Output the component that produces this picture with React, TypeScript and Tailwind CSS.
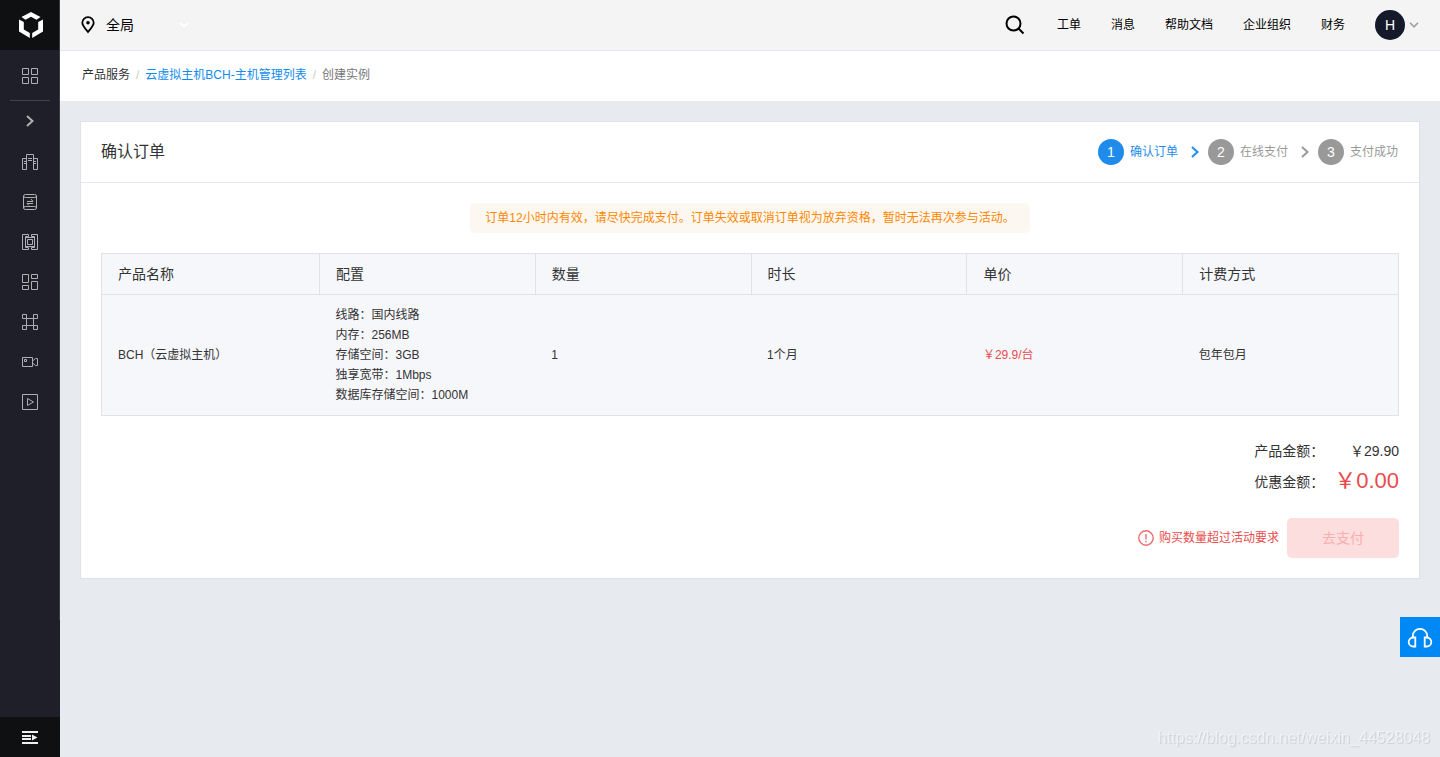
import type { ReactNode } from "react";

type Step = { n: number; label: string };

const NAV = ["工单", "消息", "帮助文档", "企业组织", "财务"];

const STEPS: Step[] = [
  { n: 1, label: "确认订单" },
  { n: 2, label: "在线支付" },
  { n: 3, label: "支付成功" },
];

const COLUMNS = ["产品名称", "配置", "数量", "时长", "单价", "计费方式"];

const SPECS = ["线路：国内线路", "内存：256MB", "存储空间：3GB", "独享宽带：1Mbps", "数据库存储空间：1000M"];

const SERVICES: { label: string; icon: ReactNode }[] = [
  { label: "云服务器", icon: <path d="M4.5 15.5v-15h7v15M4.5 4.5h-4v11h4M11.5 4.5h4v11h-4M6 4.5h4M6 6.5h4M2 7.5h2.5M2 9.5h2.5M11.5 7.5H14M11.5 9.5H14" /> },
  { label: "数据库", icon: <path d="M3.5.5h9q2 0 2 1.5t-2 1.5h-9q-2 0-2-1.5t2-1.5zM1.5 2v12M14.5 2v12M3.5 12.5h9q2 0 2 1.5t-2 1.5h-9q-2 0-2-1.5t2-1.5zM9 5l2 2.5H5M7 11.5 5 9.5h6" /> },
  { label: "虚拟主机", icon: <path d="M6.5.5h-6v15h6v-2h-3v-11h3zM9.5.5h6v15h-6v-2h3v-11h-3zM3.5 3.5h9v9h-9zM5.5 5.5h5v5h-5z" /> },
  { label: "存储", icon: <path d="M.5.5h6v8h-6zM9.5.5h6v4h-6zM.5 11.5h6v4h-6zM9.5 7.5h6v8h-6z" /> },
  { label: "网络", icon: <path d="M.5.5h4v4h-4zM11.5.5h4v4h-4zM.5 11.5h4v4h-4zM11.5 11.5h4v4h-4zM4.5 4.5v7M11.5 4.5v7M4.5 4.5h7M4.5 11.5h7" /> },
  { label: "视频", icon: <path d="M.5 3.5h10v9H.5zM2.5 5.5h2v2h-2zM10.5 7l3-2.5h2v7h-2l-3-2.5" /> },
  { label: "点播", icon: <path d="M.5.5h15v15H.5zM5.5 4.5 11.5 8l-6 3.5z" /> },
];

function LineIcon({ children }: { children: ReactNode }) {
  return (
    <svg viewBox="0 0 16 16" className="size-4" fill="none" stroke="currentColor" strokeWidth="1" aria-hidden="true">
      {children}
    </svg>
  );
}

function Chevron({ className }: { className?: string }) {
  return (
    <svg viewBox="0 0 10 12" className={`h-3 w-[10px] ${className ?? ""}`} fill="none" stroke="currentColor" strokeWidth="2" aria-hidden="true">
      <path d="M2 1 7.5 6 2 11" />
    </svg>
  );
}

function CaretDown({ className }: { className: string }) {
  return (
    <svg viewBox="0 0 10 6" className={`h-[6px] w-[10px] ${className}`} fill="none" stroke="currentColor" strokeWidth="1.6" aria-hidden="true">
      <path d="M1 .8 5 4.8 9 .8" />
    </svg>
  );
}

function Sidebar() {
  return (
    <aside className="sticky top-0 flex h-screen w-[60px] shrink-0 flex-col bg-[#1f1f29] text-[#aeafb6]">
      <a href="#" aria-label="首页" className="flex h-[50px] items-center justify-center bg-[#0f1011] pl-px text-white shadow-[inset_-1px_0_0_#3a3b45]">
        <svg viewBox="0 0 24 26" className="h-[26px] w-6" fill="currentColor" aria-hidden="true">
          <path d="M12 0 21.5 5 17.5 7.8 12 4.8 6.5 7.8 2.5 5z" />
          <path d="M0 7.5 4.8 10v7.5l6 3.5v5L0 19.5z" />
          <path d="M24 7.5 19.2 10v7.5l-6 3.5v5L24 19.5z" />
        </svg>
      </a>
      <nav className="flex min-h-0 basis-[570px] flex-col items-center shadow-[inset_-1px_0_0_#3a3b45]">
        <a href="#" aria-label="全部产品" className="flex h-[50px] items-center justify-center pt-[2px]">
          <LineIcon><path d="M.5.5h6v6h-6zM9.5.5h6v6h-6zM.5 9.5h6v6h-6zM9.5 9.5h6v6h-6z" /></LineIcon>
        </a>
        <div className="h-px w-10 bg-[#42424f]" />
        <button aria-label="展开" className="flex h-[41px] items-center justify-center pb-[2px]">
          <Chevron />
        </button>
        {SERVICES.map((s) => (
          <a key={s.label} href="#" aria-label={s.label} className="flex h-10 items-center justify-center">
            <LineIcon>{s.icon}</LineIcon>
          </a>
        ))}
      </nav>
      <button aria-label="菜单" className="mt-auto flex h-10 shrink-0 items-center justify-center bg-[#0f1011] text-[#eeeeee]">
        <svg viewBox="0 0 16 14" className="h-[14px] w-4" fill="currentColor" aria-hidden="true">
          <path d="M0 1h16v2H0zM0 5h9v2H0zM0 8h9v2H0zM0 12h16v2H0zM10 4.5 15.5 7.5 10 10.5z" />
        </svg>
      </button>
    </aside>
  );
}

function TopBar() {
  return (
    <header className="flex h-[51px] items-center justify-between border-b border-[#e4e6f0] bg-[#f4f4f4] pr-[21px] pl-5 text-black">
      <button className="flex items-center text-sm">
        <svg viewBox="0 0 16 18" className="mr-[10px] h-[18px] w-4" fill="none" stroke="currentColor" strokeWidth="1.8" aria-hidden="true">
          <path d="M8 16C5 12.5 2.3 9.6 2.3 6.8a5.7 5.7 0 0 1 11.4 0C13.7 9.6 11 12.5 8 16z" />
          <circle cx="8" cy="6.8" r="1.8" fill="currentColor" stroke="none" />
        </svg>
        全局
        <CaretDown className="ml-[45px] text-white" />
      </button>
      <div className="flex items-center gap-[30px] text-xs">
        <button aria-label="搜索" className="mr-[2px]">
          <svg viewBox="0 0 20 20" className="size-5" fill="none" stroke="currentColor" strokeWidth="2" aria-hidden="true">
            <circle cx="8.5" cy="8.5" r="7" />
            <path d="m13.5 13.5 5 5" />
          </svg>
        </button>
        {NAV.map((n) => <a key={n} href="#">{n}</a>)}
        <button aria-label="账户" className="flex items-center gap-1">
          <span className="flex size-[30px] items-center justify-center rounded-full bg-[#141a2a] text-sm text-white">H</span>
          <CaretDown className="text-[#a0a0a0]" />
        </button>
      </div>
    </header>
  );
}

function Steps() {
  return (
    <ol className="flex items-center text-xs">
      {STEPS.map((s, i) => {
        const on = s.n === 1;
        return (
          <li key={s.n} className={`flex items-center ${on ? "text-[#1f8ceb]" : "text-[#999999]"}`}>
            <span className={`mr-[6px] flex size-[26px] items-center justify-center rounded-full text-sm text-white ${on ? "bg-[#1f8ceb]" : "bg-[#999999]"}`}>{s.n}</span>
            {s.label}
            {i < STEPS.length - 1 && <Chevron className="mr-2 ml-3" />}
          </li>
        );
      })}
    </ol>
  );
}

function OrderTable() {
  return (
    <table className="mt-5 w-full table-fixed border-collapse border border-[#e0e2e6] bg-[#f6f7fb] text-left">
      <thead>
        <tr className="h-[41px] border-b border-[#e0e2e6] text-sm">
          {COLUMNS.map((c) => <th key={c} scope="col" className="border-r border-[#e0e2e6] px-4 font-normal first:w-[218px]">{c}</th>)}
        </tr>
      </thead>
      <tbody>
        <tr className="h-[121px] text-xs">
          <td className="px-4">BCH（云虚拟主机）</td>
          <td className="px-4 py-[10px]">
            <ul>
              {SPECS.map((s) => <li key={s} className="leading-5">{s}</li>)}
            </ul>
          </td>
          <td className="px-4">1</td>
          <td className="px-4">1个月</td>
          <td className="px-4 text-[#e84c4c]">￥29.9/台</td>
          <td className="px-4">包年包月</td>
        </tr>
      </tbody>
    </table>
  );
}

function Totals() {
  return (
    <dl className="mt-5 grid grid-cols-[auto_auto] justify-end gap-x-[10px] text-right text-sm">
      <dt className="leading-[30px]">产品金额：</dt>
      <dd className="leading-[30px]">￥29.90</dd>
      <dt className="leading-8">优惠金额：</dt>
      <dd className="text-[22px] leading-[30px] text-[#e84c4c]">￥0.00</dd>
    </dl>
  );
}

export default function App() {
  return (
    <div className="flex min-h-screen bg-[#e7ebf0] font-['Liberation_Sans','Noto_Sans_CJK_SC',sans-serif] text-[#333333]">
      <Sidebar />
      <div className="min-w-0 flex-1">
        <TopBar />
        <nav aria-label="路径" className="flex h-[50px] items-center gap-[6px] bg-white px-[22px] pb-[2px] text-xs">
          <a href="#">产品服务</a>
          <span className="text-[#cccccc]">/</span>
          <a href="#" className="text-[#108cee]">云虚拟主机BCH-主机管理列表</a>
          <span className="text-[#cccccc]">/</span>
          <span className="text-[#777777]">创建实例</span>
        </nav>

        <main className="m-5 border border-[#dce1ea] bg-white">
          <div className="flex h-[61px] items-center justify-between border-b border-[#e1e6f0] pr-[21px] pb-px pl-5">
            <h1 className="text-base">确认订单</h1>
            <Steps />
          </div>
          <div className="p-5">
            <p className="mx-auto w-fit rounded-[5px] bg-[#fcf7f1] px-[15px] text-xs leading-[30px] text-[#ff8800]">
              订单12小时内有效，请尽快完成支付。订单失效或取消订单视为放弃资格，暂时无法再次参与活动。
            </p>
            <OrderTable />
            <Totals />
            <div className="mt-5 flex items-center justify-end gap-2">
              <p className="flex items-center gap-[5px] text-xs text-[#e84c4c]">
                <svg viewBox="0 0 16 16" className="size-4 text-[#ee6e6e]" fill="none" stroke="currentColor" strokeWidth="1.4" aria-hidden="true">
                  <circle cx="8" cy="8" r="7.2" />
                  <path d="M8 4v5.5M8 10.7v1.6" />
                </svg>
                购买数量超过活动要求
              </p>
              <button disabled className="h-10 w-28 rounded-[5px] bg-[#fcdede] text-sm text-[#f9afaf]">去支付</button>
            </div>
          </div>
        </main>
      </div>

      <button aria-label="在线客服" className="fixed right-0 bottom-[100px] flex size-10 items-center justify-center bg-[#0088f5] pt-px text-white">
        <svg viewBox="0 0 26 22" className="h-[22px] w-[26px]" fill="none" stroke="currentColor" strokeWidth="1.8" aria-hidden="true">
          <path d="M5.8 11V9a7.2 7.2 0 0 1 14.4 0v2" />
          <path d="M8.3 10.5v9H6.2a4.5 4.5 0 0 1 0-9zM17.7 10.5v9h2.1a4.5 4.5 0 0 0 0-9z" />
        </svg>
      </button>
      <span className="fixed right-[10px] bottom-[7px] text-base text-white/50 [text-shadow:1px_1px_1px_rgba(0,0,0,0.12)]">https://blog.csdn.net/weixin_44528048</span>
    </div>
  );
}
